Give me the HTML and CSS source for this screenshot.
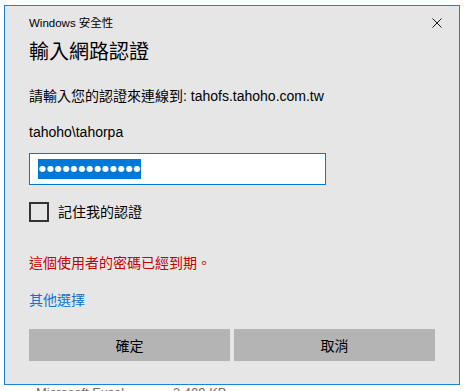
FILE: index.html
```html
<!DOCTYPE html>
<html lang="zh-Hant">
<head>
    <meta charset="UTF-8">
    <title>Windows 安全性</title>
    <link rel="stylesheet" href="styles.css">
</head>
<body>

    <div class="dialog">
        <div class="titlebar">
            <span class="caption">Windows 安全性</span>
            <span class="close">
                <svg width="10" height="10" viewBox="0 0 10 10">
                    <path d="M0.5 0.5 L9.5 9.5 M9.5 0.5 L0.5 9.5" stroke="#1a1a1a" stroke-width="1" fill="none"/>
                </svg>
            </span>
        </div>

        <h1 class="heading">輸入網路認證</h1>

        <p class="prompt">請輸入您的認證來連線到: tahofs.tahoho.com.tw</p>
        <p class="user">tahoho\tahorpa</p>

        <div class="field">
            <span class="selected">●●●●●●●●●●●●●</span>
        </div>

        <label class="remember">
            <span class="box"></span>
            記住我的認證
        </label>

        <p class="error">這個使用者的密碼已經到期。</p>

        <a class="more" href="#">其他選擇</a>

        <div class="actions">
            <button type="button">確定</button>
            <button type="button">取消</button>
        </div>
    </div>

    <!-- file list behind the dialog -->
    <div class="filerow">
        <span class="type">Microsoft Excel</span>
        <span class="size">3,409 KB</span>
    </div>

</body>
</html>
```

FILE: styles.css
```css
body {
    margin: 0;
    background: #fff;
    font-family: "Liberation Sans", "Noto Sans CJK TC", sans-serif;
    color: #000;
    overflow: hidden;
}

.dialog {
    margin: 5px 0 0 4px;
    padding: 0 24px 23px 24px;
    width: 406px;
    background: #e6e6e6;
    border: 1px solid #1883d7;
}

.titlebar {
    height: 34px;
    display: flex;
    align-items: center;
    justify-content: space-between;
}

.caption {
    font-size: 11.5px;
    line-height: 16px;
}

.close {
    display: flex;
    margin-right: -7px;
}

.heading {
    margin: 0;
    font-size: 20px;
    font-weight: normal;
    line-height: 24px;
}

.prompt,
.user,
.error {
    margin: 0;
    font-size: 14px;
    line-height: 20px;
}

.prompt {
    margin-top: 22px;
}

.user {
    margin-top: 16px;
}

.field {
    margin-top: 11px;
    width: 297px;
    height: 32px;
    box-sizing: border-box;
    border: 1px solid #0078d7;
    background: #fff;
    padding: 5px 8px;
    display: flex;
    align-items: center;
}

.selected {
    display: block;
    height: 20px;
    line-height: 20px;
    background: #0078d7;
    color: #fff;
    font-family: "DejaVu Sans", sans-serif;
    font-size: 8px;
    letter-spacing: 0.9px;
    padding-left: 1px;
}

.remember {
    margin-top: 17px;
    display: flex;
    align-items: center;
    font-size: 14px;
    line-height: 20px;
}

.box {
    width: 20px;
    height: 20px;
    box-sizing: border-box;
    border: 2px solid #333;
    margin-right: 9px;
}

.error {
    margin-top: 31px;
    color: #c50000;
}

.more {
    display: block;
    margin-top: 17px;
    font-size: 14px;
    line-height: 20px;
    color: #0a74cf;
    text-decoration: none;
}

.actions {
    margin-top: 19px;
    display: flex;
    gap: 4px;
}

.actions button {
    flex: 1;
    height: 32px;
    border: none;
    background: #b4b4b4;
    font-family: inherit;
    font-size: 14px;
    color: #000;
    padding: 0;
}

.filerow {
    display: flex;
    padding-left: 36px;
    margin-top: 0;
    font-size: 13px;
    line-height: 16px;
    color: #6d6d6d;
}

.filerow .type {
    width: 137px;
}
```
